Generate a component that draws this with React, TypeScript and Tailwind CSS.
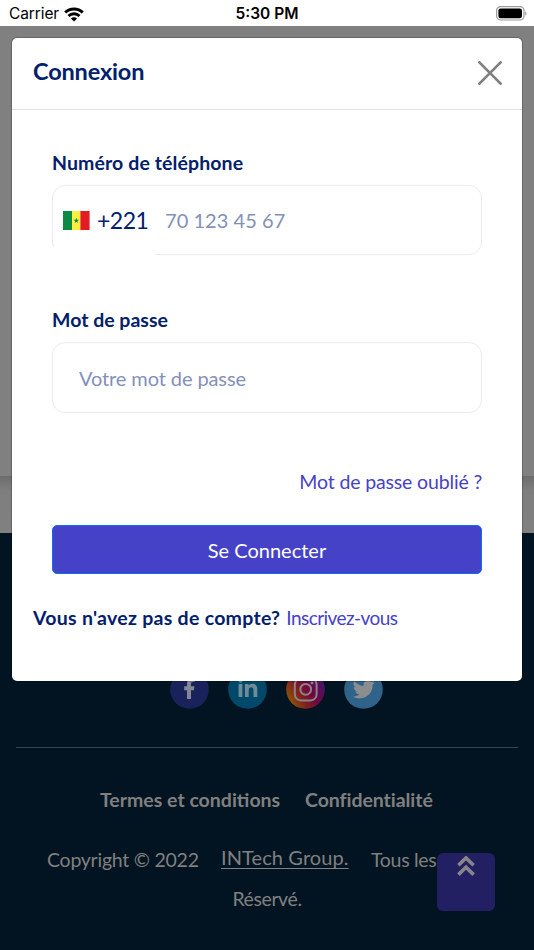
import React, { useState } from 'react';

function WifiIcon() {
  return (
    <svg viewBox="0 0 20 15" className="w-5 h-[15px]" fill="none" stroke="#000" strokeWidth="2.9">
      <path d="M1.2 5.6A12.4 12.4 0 0 1 18.8 5.6" />
      <path d="M4.5 9A7.8 7.8 0 0 1 15.5 9" />
      <path d="M10 14.6L6.9 11.5A4.4 4.4 0 0 1 13.1 11.5Z" fill="#000" stroke="none" />
    </svg>
  );
}

function BatteryIcon() {
  return (
    <svg viewBox="0 0 32 15" className="w-8 h-[15px]">
      <rect x="0.6" y="0.6" width="27.4" height="13.4" rx="4" fill="none" stroke="#9a9a9a" strokeWidth="1.2" />
      <rect x="2.4" y="2.4" width="23.6" height="9.8" rx="2.2" fill="#000" />
      <path d="M29.2 5.2a2.6 2.6 0 0 1 0 4.4z" fill="#9a9a9a" />
    </svg>
  );
}

function SenegalFlag() {
  return (
    <svg viewBox="0 0 27 19" className="w-[27px] h-[19px]">
      <rect width="9" height="19" fill="#0b8a43" />
      <rect x="9" width="8.6" height="19" fill="#fdee42" />
      <rect x="17.4" width="9.2" height="19" fill="#e31b23" />
      <path d="M13.3 6.7l.7 2h2.1l-1.7 1.3.6 2-1.7-1.2-1.7 1.2.6-2-1.7-1.3h2.1z" fill="#0b8a43" />
    </svg>
  );
}

function FacebookIcon() {
  return (
    <svg viewBox="0 0 39 39" className="w-[39px] h-[39px]">
      <circle cx="19.5" cy="19.5" r="19.3" fill="#19225a" />
      <path
        d="M17 29V20.2H14.2v-4H17v-2.9c0-3.4 2-5.2 5-5.2 1 0 2 .1 2.7.2v3.6h-2c-1.3 0-1.7.7-1.7 1.8v2.5h3.5l-.6 4H21V29z"
        fill="#858796"
      />
    </svg>
  );
}

function LinkedinIcon() {
  return (
    <svg viewBox="0 0 39 39" className="w-[39px] h-[39px]">
      <circle cx="19.5" cy="19.5" r="19.3" fill="#00496a" />
      <g fill="#708b98">
        <circle cx="12.5" cy="10.5" r="2.2" />
        <path d="M10.6 14h3.8v13h-3.8z" />
        <path d="M16.9 14h3.6V15.900c.7-1.200 2-2.100 3.900-2.100 3.600 0 4.900 2.400 4.900 5.800V27h-3.800v-6.600c0-1.900-.4-3.200-2.300-3.200-1.800 0-2.500 1.200-2.500 3.100V27h-3.800z" />
      </g>
    </svg>
  );
}

function InstagramIcon() {
  return (
    <svg viewBox="0 0 39 39" className="w-[39px] h-[39px]">
      <defs>
        <linearGradient id="insta" x1="0.08" y1="0.75" x2="0.92" y2="0.25">
          <stop offset="0" stopColor="#8a5109" />
          <stop offset="0.28" stopColor="#80231c" />
          <stop offset="0.6" stopColor="#6b0743" />
          <stop offset="1" stopColor="#471568" />
        </linearGradient>
      </defs>
      <circle cx="19.5" cy="19.5" r="19.3" fill="url(#insta)" />
      <rect x="8.8" y="8.6" width="21.8" height="21.8" rx="6" fill="none" stroke="#938087" strokeWidth="2" />
      <circle cx="19.7" cy="19.3" r="5.4" fill="none" stroke="#938087" strokeWidth="2" />
      <circle cx="26" cy="13" r="1.4" fill="#938087" />
    </svg>
  );
}

function TwitterIcon() {
  return (
    <svg viewBox="0 0 39 39" className="w-[39px] h-[39px]">
      <circle cx="19.5" cy="19.5" r="19.3" fill="#30638a" />
      <g transform="translate(8.8 8.4) scale(0.92)">
        <path
          d="M23.95 4.57a10 10 0 0 1-2.82.77 4.96 4.96 0 0 0 2.16-2.72c-.95.55-2 .95-3.13 1.18a4.92 4.92 0 0 0-8.38 4.48C7.69 8.1 4.07 6.13 1.64 3.16a4.9 4.9 0 0 0 1.52 6.57 4.9 4.9 0 0 1-2.23-.61v.06a4.92 4.92 0 0 0 3.95 4.83 5 5 0 0 1-2.21.08 4.94 4.94 0 0 0 4.6 3.42A9.87 9.87 0 0 1 0 19.54a14 14 0 0 0 7.55 2.21c9.05 0 14-7.5 14-13.98l-.02-.64a9.94 9.94 0 0 0 2.42-2.56z"
          fill="#8c8d8e"
        />
      </g>
    </svg>
  );
}

function Footer() {
  return (
    <footer className="h-[417px] bg-[#021421] px-4 pt-[137px] text-[#808080]">
      <div className="flex gap-[19px] pl-[154px]">
        <FacebookIcon />
        <LinkedinIcon />
        <InstagramIcon />
        <TwitterIcon />
      </div>
      <hr className="mt-[38px] border-[#3b4350]" />
      <div className="mt-9 flex h-8 items-center pl-[84px] text-[19.5px] font-bold">
        <a className="w-[205px] whitespace-nowrap">Termes et conditions</a>
        <a className="whitespace-nowrap tracking-[-0.05px]">Confidentialité</a>
      </div>
      <div className="mt-6 flex h-[39px] items-center pl-[31px] text-[19.5px]">
        <span className="w-[174px] whitespace-nowrap tracking-[-0.25px]">Copyright © 2022</span>
        <a className="w-[150px] whitespace-nowrap pb-[5px] text-[20px] tracking-[0.1px] underline decoration-1 underline-offset-[3px]">INTech Group.</a>
        <span className="whitespace-nowrap tracking-[-0.3px]">Tous les droits</span>
      </div>
      <div className="flex h-[39px] items-center justify-center text-[19.5px] tracking-[-0.4px]">Réservé.</div>
    </footer>
  );
}

function LoginModal() {
  const [phone, setPhone] = useState('');
  const [password, setPassword] = useState('');

  return (
    <div className="absolute left-3 top-[38px] h-[643px] w-[510px] rounded-[5px] bg-white text-[#02206b] shadow-[0_0_0_1px_rgba(0,0,0,0.2)]">
      <div className="flex h-[72px] items-center justify-between border-b border-[#dee2e6] pl-[21px] pr-5">
        <h5 className="pb-1 text-[23.5px] font-bold tracking-[-0.15px]">Connexion</h5>
        <button type="button" aria-label="Fermer" className="pb-px">
          <svg viewBox="0 0 24 24" className="w-6 h-6" stroke="#7f7f7f" strokeWidth="2.7" strokeLinecap="round">
            <path d="M1.4 1.4l21.2 21.2M22.6 1.4L1.4 22.6" />
          </svg>
        </button>
      </div>

      <form className="flex flex-col px-10 pt-[37px]">
        <label className="h-[38px] pt-1 text-[19.5px] leading-6 font-bold tracking-[0.1px] whitespace-nowrap">
          Numéro de téléphone
        </label>
        <div className="relative flex h-[70px] items-center rounded-[13px] border border-[#ebeaf7] pl-2.5">
          <div className="absolute -left-0.5 top-[61px] h-[11px] w-[104px] bg-white" />
          <SenegalFlag />
          <span className="ml-[7px] w-[68px] text-[23px] tracking-[-0.5px] whitespace-nowrap">+221</span>
          <input
            value={phone}
            onChange={(e) => setPhone(e.target.value)}
            placeholder="70 123 45 67"
            className="w-[300px] text-[20px] tracking-[0.05px] outline-none placeholder:text-[#8390b8]"
          />
        </div>

        <label className="mt-[49px] h-[38px] pt-1 text-[19.5px] leading-6 font-bold whitespace-nowrap">Mot de passe</label>
        <input
          type="password"
          value={password}
          onChange={(e) => setPassword(e.target.value)}
          placeholder="Votre mot de passe"
          className="h-[71px] rounded-[13px] border border-[#ebeaf7] px-[26px] text-[20px] tracking-[-0.1px] outline-none placeholder:text-[#8390b8]"
        />

        <a className="mt-[54px] h-[30px] self-end text-[19.5px] leading-[30px] tracking-[-0.15px] whitespace-nowrap text-[#4642c8]">
          Mot de passe oublié ?
        </a>
        <button
          type="button"
          className="mt-7 h-[49px] rounded-[5px] border border-[#0d6efd] bg-[#4642c8] text-[20px] text-white"
        >
          Se Connecter
        </button>
      </form>

      <p className="mt-[29px] flex gap-1.5 pl-[21px] text-[19.5px] leading-[30px] whitespace-nowrap">
        <span className="font-bold tracking-[0.28px]">Vous n'avez pas de compte?</span>
        <a className="text-[19px] tracking-[-0.55px] text-[#4642c8]">Inscrivez-vous</a>
      </p>
    </div>
  );
}

export default function App() {
  return (
    <div className="relative h-[950px] w-[534px] overflow-hidden bg-[#808080] font-['Lato',sans-serif]">
      <div className="grid h-[26px] grid-cols-3 items-center bg-white px-[9px] pt-0.5 font-['Inter',sans-serif] text-[15.5px] text-black">
        <div className="flex items-center gap-[5px]">
          <span className="tracking-[-0.1px]">Carrier</span>
          <WifiIcon />
        </div>
        <span className="text-center font-semibold">5:30 PM</span>
        <div className="-mr-[3px] flex justify-end pb-0.5">
          <BatteryIcon />
        </div>
      </div>
      <div className="h-[450px] bg-[#808080]" />
      <div className="h-[57px] bg-gradient-to-b from-[#6c6c6c] via-[#7e7e7e] via-25% to-[#808080]" />
      <Footer />

      <button
        type="button"
        aria-label="Haut de page"
        className="absolute left-[437px] top-[853px] flex h-[58px] w-[58px] justify-center rounded-md bg-[#231f63] pt-[3px]"
      >
        <svg viewBox="0 0 18 20" className="h-5 w-[18px]" fill="none" stroke="#86868a" strokeWidth="3.6">
          <path d="M1.4 9.3L9 1.9l7.6 7.4M1.4 18.6L9 11.2l7.6 7.4" />
        </svg>
      </button>

      <LoginModal />
    </div>
  );
}
